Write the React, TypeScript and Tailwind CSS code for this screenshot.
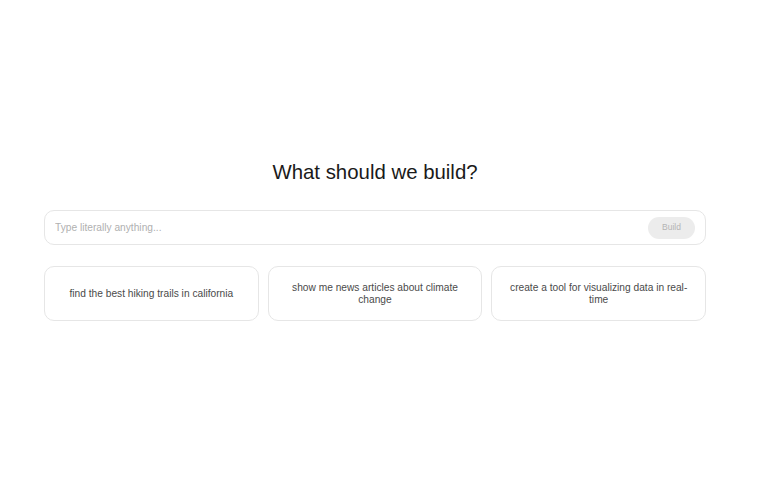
import React, { useState } from 'react';

const suggestions = [
  'find the best hiking trails in california',
  'show me news articles about climate change',
  'create a tool for visualizing data in real-time',
];

const App: React.FC = () => {
  const [prompt, setPrompt] = useState('');

  return (
    <div
      className="min-h-screen w-full bg-white"
      style={{ fontFamily: 'Arial, "Liberation Sans", sans-serif' }}
    >
      <main className="ml-[44px] flex w-[662px] flex-col pt-[160px]">
        <h1 className="text-center text-[20.4px] leading-[24px] font-normal text-[#1a1a1a]">
          What should we build?
        </h1>

        <div className="mt-[26px] flex h-[35px] items-center rounded-[10px] border border-[#e6e6e6] pr-[10px] pl-[10px]">
          <input
            value={prompt}
            onChange={(e) => setPrompt(e.target.value)}
            placeholder="Type literally anything..."
            className="flex-1 bg-transparent text-[10.2px] text-[#333] outline-none placeholder:text-[#b0b0b0]"
          />
          <button className="flex h-[22px] w-[47px] items-center justify-center rounded-full bg-[#ececec] text-[8.5px] text-[#b4b4b4]">
            Build
          </button>
        </div>

        <div className="mt-[21px] grid grid-cols-3 gap-[9px]">
          {suggestions.map((s) => (
            <button
              key={s}
              onClick={() => setPrompt(s)}
              className="flex h-[55px] items-center justify-center rounded-[10px] border border-[#e6e6e6] bg-white px-[16px] text-center text-[10.2px] leading-[12px] text-[#4a4a4a]"
            >
              {s}
            </button>
          ))}
        </div>
      </main>
    </div>
  );
};

export default App;
